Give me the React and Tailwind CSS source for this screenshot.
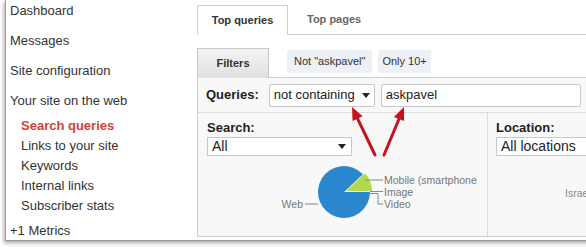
export default function App() {
  const Tri = () => (
    <svg width="8" height="5" viewBox="0 0 8 5"><polygon points="0,0 8,0 4,5" fill="#222" /></svg>
  );
  return (
    <div className="relative w-[586px] h-[247px] overflow-hidden bg-white font-['Liberation_Sans',Arial,sans-serif]">
      <div className="ml-[5px] w-[640px] h-[241px] border-l border-b border-[#9a9a9a] shadow-[-1px_2px_4px_rgba(0,0,0,0.35)] flex overflow-hidden bg-white">
        {/* Sidebar */}
        <div className="w-[191px] shrink-0 text-[13px] text-[#333]">
          <div className="h-[26px] leading-[22px] pl-[4px]">Dashboard</div>
          <div className="h-[30px] leading-[30px] pl-[4px]">Messages</div>
          <div className="h-[30px] leading-[30px] pl-[4px]">Site configuration</div>
          <div className="h-[30px] leading-[30px] pl-[4px]">Your site on the web</div>
          <div className="h-[20px] leading-[20px] pl-[15px] font-bold text-[#d0433a]">Search queries</div>
          <div className="h-[20px] leading-[20px] pl-[15px]">Links to your site</div>
          <div className="h-[20px] leading-[20px] pl-[15px]">Keywords</div>
          <div className="h-[20px] leading-[20px] pl-[15px]">Internal links</div>
          <div className="h-[20px] leading-[20px] pl-[15px]">Subscriber stats</div>
          <div className="h-[30px] leading-[30px] pl-[4px]">+1 Metrics</div>
        </div>

        {/* Main */}
        <div className="w-[430px] shrink-0">
          <div className="flex pt-[5px] h-[35px]">
            <div className="w-[91px] h-[30px] border border-b-0 border-[#cfcfcf] bg-white flex items-center justify-center text-[11px] font-bold text-[#333]">Top queries</div>
            <div className="flex-1 h-[30px] border-b border-[#cfcfcf] flex items-center pl-[19px] text-[11px] font-bold text-[#666]">Top pages</div>
          </div>

          <div className="flex h-[30px] mt-[13px]">
            <div className="w-[72px] h-[30px] border border-b-0 border-[#c8c8c8] bg-linear-to-b from-[#f4f4f4] to-[#e0e0e0] flex items-center justify-center text-[11px] font-bold text-[#333]">Filters</div>
            <div className="flex-1 h-[30px] border-b border-[#cfcfcf] flex items-start pt-[2px] pl-[18px] gap-[6px]">
              <div className="h-[23px] px-[7px] bg-[#edf0f5] rounded-[2px] flex items-center text-[11px] text-[#333]">Not "askpavel"</div>
              <div className="h-[23px] px-[4px] bg-[#edf0f5] rounded-[2px] flex items-center text-[11px] text-[#333]">Only 10+</div>
            </div>
          </div>

          <div className="h-[159px] border-l border-b border-[#cfcfcf] bg-[#f8f8f8]">
            <div className="h-[35px] border-b border-[#dcdcdc] flex items-center pl-[8px]">
              <span className="font-bold text-[13px] text-[#222]">Queries:</span>
              <div className="ml-[10px] w-[106px] h-[23px] bg-white border border-[#c8c8c8] rounded-[2px] flex items-center justify-between pl-[4px] pr-[4px] text-[13px] text-[#222]">
                <span>not containing</span>
                <Tri />
              </div>
              <div className="ml-[6px] w-[200px] h-[23px] bg-white border border-[#c8c8c8] rounded-[2px] flex items-center pl-[4px] text-[13px] text-[#222]">askpavel</div>
            </div>
            <div className="flex h-[123px]">
              <div className="w-[290px] shrink-0 border-r border-[#dcdcdc] pt-[7px] pl-[9px]">
                <div className="leading-[16px] font-bold text-[13px] text-[#222]">Search:</div>
                <div className="mt-[1px] w-[145px] h-[19px] bg-white border border-[#c8c8c8] flex items-center justify-between pl-[4px] pr-[5px] text-[14px] text-[#222]">
                  <span>All</span>
                  <Tri />
                </div>
                <svg className="-ml-[9px] block" width="289" height="80" viewBox="0 0 289 80" fontFamily="Liberation Sans, Arial, sans-serif">
                  <path d="M146,36 L165,18.3 A26,26 0 1,0 172,36 Z" fill="#2b88cf" />
                  <path d="M148,35 L174,35 A26,26 0 0,0 167,17.3 Z" fill="#b4d84b" />
                  <g stroke="#888" strokeWidth="1" fill="none">
                    <line x1="167" y1="24" x2="185" y2="24" />
                    <line x1="172" y1="35.5" x2="185" y2="35.5" />
                    <polyline points="172,37.5 180,37.5 180,48 185,48" />
                    <line x1="107" y1="48" x2="120" y2="48" />
                  </g>
                  <g fill="#777" fontSize="10.5">
                    <text x="186" y="27.5">Mobile (smartphone</text>
                    <text x="186" y="39.5">Image</text>
                    <text x="186" y="51.5">Video</text>
                    <text x="105" y="51.5" textAnchor="end">Web</text>
                  </g>
                </svg>
              </div>
              <div className="flex-1 pt-[7px] pl-[8px]">
                <div className="leading-[16px] font-bold text-[13px] text-[#222]">Location:</div>
                <div className="mt-[1px] w-[200px] h-[19px] bg-white border border-[#c8c8c8] flex items-center pl-[4px] text-[14px] text-[#222]">All locations</div>
                <div className="mt-[30px] ml-[69px] leading-[14px] text-[10.5px] text-[#888]">Israel</div>
              </div>
            </div>
          </div>
        </div>
      </div>

      {/* Annotation arrows */}
      <svg className="absolute left-0 top-0 pointer-events-none" width="586" height="247" viewBox="0 0 586 247">
        <g stroke="#c5121c" strokeWidth="3" strokeLinecap="round">
          <line x1="375" y1="155" x2="357.6" y2="118.7" />
          <line x1="384" y1="155" x2="399" y2="119" />
        </g>
        <g fill="#c5121c">
          <polygon points="352,107 362.6,116.3 352.6,121.1" />
          <polygon points="404,107 404.1,121.1 393.9,116.9" />
        </g>
      </svg>
    </div>
  );
}
